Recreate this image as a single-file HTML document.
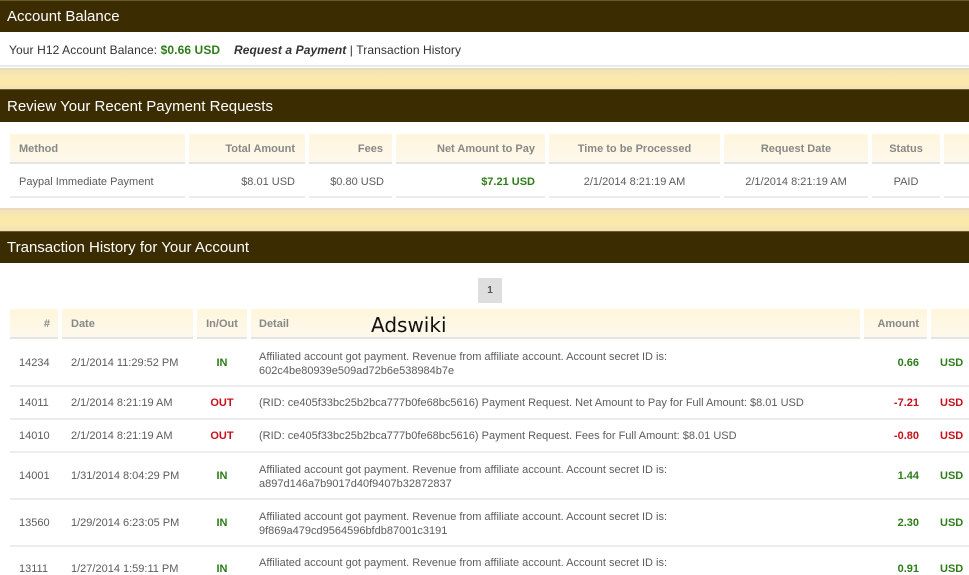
<!DOCTYPE html>
<html><head><meta charset="utf-8"><style>
*{margin:0;padding:0;box-sizing:border-box}
body{width:969px;height:571px;overflow:hidden;background:#fff;position:relative;font-family:"Liberation Sans",Arial,sans-serif;font-size:11px;color:#5c5c5c}
.a{position:absolute;white-space:nowrap}
.bar{position:absolute;left:0;width:969px;background:#3c2c02;color:#fff;font-size:15px;padding-left:7px;border-top:1px solid #6b5a2a}
.cream{position:absolute;left:0;width:969px;background:linear-gradient(#f3e3b8,#fbe8ab 40%,#fbe8ab 70%,#f3e3b8);border-top:2px solid #e8dcbc}
.hd{position:absolute;background:linear-gradient(#fff6dc,#fdf8ec);border-bottom:2px solid #e4e4e4;font-weight:bold;color:#888;font-size:11px}
.rl{position:absolute;height:2px;background:#ececec}
.g{color:#2e7d1a;font-weight:bold}
.r{color:#c8101c;font-weight:bold}
</style></head><body>
<div class="bar" style="top:0;height:32px;line-height:31px">Account Balance</div>
<div class="a" style="top:43px;left:9px;font-size:12px;color:#333;letter-spacing:0.1px">Your H12 Account Balance: <span class="g">$0.66 USD</span> &nbsp; &nbsp;<b><i>Request a Payment</i></b> | Transaction History</div>
<div class="rl" style="top:65px;left:0;width:969px;background:#e6ebee"></div>
<div class="cream" style="top:68px;height:21px"></div>
<div class="bar" style="top:89px;height:33px;line-height:33px">Review Your Recent Payment Requests</div>

<div class="hd" style="top:134px;left:10px;width:175px;height:30px;line-height:31px;padding-left:9px">Method</div>
<div class="hd" style="top:134px;left:189px;width:116px;height:30px;line-height:31px;text-align:right;padding-right:10px">Total Amount</div>
<div class="hd" style="top:134px;left:309px;width:83px;height:30px;line-height:31px;text-align:right;padding-right:9px">Fees</div>
<div class="hd" style="top:134px;left:396px;width:149px;height:30px;line-height:31px;text-align:right;padding-right:10px">Net Amount to Pay</div>
<div class="hd" style="top:134px;left:549px;width:171px;height:30px;line-height:31px;text-align:center">Time to be Processed</div>
<div class="hd" style="top:134px;left:724px;width:144px;height:30px;line-height:31px;text-align:center">Request Date</div>
<div class="hd" style="top:134px;left:872px;width:68px;height:30px;line-height:31px;text-align:center">Status</div>
<div class="hd" style="top:134px;left:944px;width:25px;height:30px"></div>
<div class="a" style="top:176px;left:19px">Paypal Immediate Payment</div>
<div class="a" style="top:176px;left:189px;width:106px;text-align:right">$8.01 USD</div>
<div class="a" style="top:176px;left:309px;width:75px;text-align:right">$0.80 USD</div>
<div class="a g" style="top:176px;left:396px;width:139px;text-align:right">$7.21 USD</div>
<div class="a" style="top:176px;left:549px;width:171px;text-align:center">2/1/2014 8:21:19 AM</div>
<div class="a" style="top:176px;left:724px;width:144px;text-align:center">2/1/2014 8:21:19 AM</div>
<div class="a" style="top:176px;left:872px;width:68px;text-align:center">PAID</div>
<div class="rl" style="top:196px;left:10px;width:175px"></div><div class="rl" style="top:196px;left:189px;width:116px"></div><div class="rl" style="top:196px;left:309px;width:83px"></div><div class="rl" style="top:196px;left:396px;width:149px"></div><div class="rl" style="top:196px;left:549px;width:171px"></div><div class="rl" style="top:196px;left:724px;width:144px"></div><div class="rl" style="top:196px;left:872px;width:68px"></div><div class="rl" style="top:196px;left:944px;width:25px"></div>

<div class="cream" style="top:208px;height:23px"></div>
<div class="bar" style="top:231px;height:32px;line-height:31px">Transaction History for Your Account</div>

<div class="a" style="top:278px;left:478px;width:24px;height:25px;background:#dedede;text-align:center;line-height:25px;font-weight:bold;font-size:10px;color:#555">1</div>

<div class="hd" style="top:309px;left:10px;width:48px;height:30px;line-height:31px;text-align:right;padding-right:8px">#</div>
<div class="hd" style="top:309px;left:62px;width:131px;height:30px;line-height:31px;padding-left:9px">Date</div>
<div class="hd" style="top:309px;left:197px;width:50px;height:30px;line-height:31px;text-align:center">In/Out</div>
<div class="hd" style="top:309px;left:251px;width:609px;height:30px;line-height:31px;padding-left:8px">Detail</div>
<div class="hd" style="top:309px;left:864px;width:63px;height:30px;line-height:31px;text-align:right;padding-right:8px">Amount</div>
<div class="hd" style="top:309px;left:931px;width:38px;height:30px"></div>
<div class="a" style="top:313px;left:371px;font-size:20px;color:#111;font-family:'DejaVu Sans',sans-serif">Adswiki</div>

<div class="a" style="top:357px;left:19px">14234</div><div class="a" style="top:357px;left:71px">2/1/2014 11:29:52 PM</div><div class="a g" style="top:357px;left:197px;width:50px;text-align:center">IN</div>
<div class="a" style="top:350px;left:259px;line-height:14px">Affiliated account got payment. Revenue from affiliate account. Account secret ID is:<br>602c4be80939e509ad72b6e538984b7e</div>
<div class="a g" style="top:357px;left:864px;width:55px;text-align:right">0.66</div><div class="a g" style="top:357px;left:940px">USD</div>

<div class="a" style="top:397px;left:19px">14011</div><div class="a" style="top:397px;left:71px">2/1/2014 8:21:19 AM</div><div class="a r" style="top:397px;left:197px;width:50px;text-align:center">OUT</div>
<div class="a" style="top:397px;left:259px">(RID: ce405f33bc25b2bca777b0fe68bc5616) Payment Request. Net Amount to Pay for Full Amount: $8.01 USD</div>
<div class="a r" style="top:397px;left:864px;width:55px;text-align:right">-7.21</div><div class="a r" style="top:397px;left:940px">USD</div>

<div class="a" style="top:430px;left:19px">14010</div><div class="a" style="top:430px;left:71px">2/1/2014 8:21:19 AM</div><div class="a r" style="top:430px;left:197px;width:50px;text-align:center">OUT</div>
<div class="a" style="top:430px;left:259px">(RID: ce405f33bc25b2bca777b0fe68bc5616) Payment Request. Fees for Full Amount: $8.01 USD</div>
<div class="a r" style="top:430px;left:864px;width:55px;text-align:right">-0.80</div><div class="a r" style="top:430px;left:940px">USD</div>

<div class="a" style="top:470px;left:19px">14001</div><div class="a" style="top:470px;left:71px">1/31/2014 8:04:29 PM</div><div class="a g" style="top:470px;left:197px;width:50px;text-align:center">IN</div>
<div class="a" style="top:463px;left:259px;line-height:14px">Affiliated account got payment. Revenue from affiliate account. Account secret ID is:<br>a897d146a7b9017d40f9407b32872837</div>
<div class="a g" style="top:470px;left:864px;width:55px;text-align:right">1.44</div><div class="a g" style="top:470px;left:940px">USD</div>

<div class="a" style="top:517px;left:19px">13560</div><div class="a" style="top:517px;left:71px">1/29/2014 6:23:05 PM</div><div class="a g" style="top:517px;left:197px;width:50px;text-align:center">IN</div>
<div class="a" style="top:510px;left:259px;line-height:14px">Affiliated account got payment. Revenue from affiliate account. Account secret ID is:<br>9f869a479cd9564596bfdb87001c3191</div>
<div class="a g" style="top:517px;left:864px;width:55px;text-align:right">2.30</div><div class="a g" style="top:517px;left:940px">USD</div>

<div class="a" style="top:563px;left:19px">13111</div><div class="a" style="top:563px;left:71px">1/27/2014 1:59:11 PM</div><div class="a g" style="top:563px;left:197px;width:50px;text-align:center">IN</div>
<div class="a" style="top:556px;left:259px;line-height:14px">Affiliated account got payment. Revenue from affiliate account. Account secret ID is:</div>
<div class="a g" style="top:563px;left:864px;width:55px;text-align:right">0.91</div><div class="a g" style="top:563px;left:940px">USD</div>

<div class="rl" style="top:385px;left:10px;width:959px"></div>
<div class="rl" style="top:418px;left:10px;width:959px"></div>
<div class="rl" style="top:451px;left:10px;width:959px"></div>
<div class="rl" style="top:498px;left:10px;width:959px"></div>
<div class="rl" style="top:545px;left:10px;width:959px"></div>
</body></html>
